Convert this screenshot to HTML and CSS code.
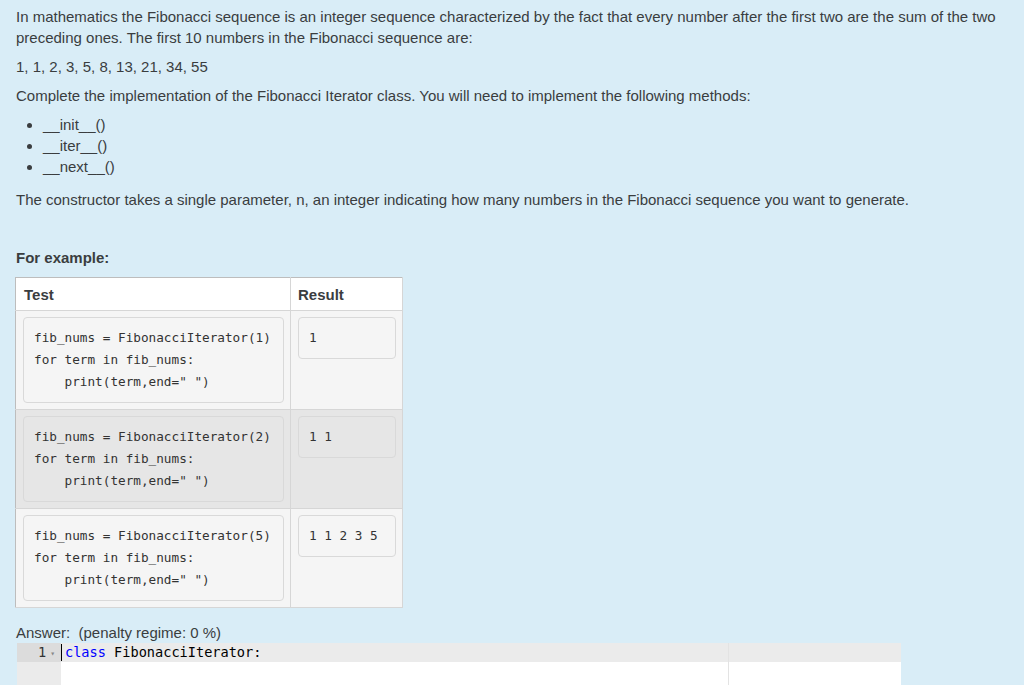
FILE: index.html
```html
<!doctype html>
<html>
<head>
<meta charset="utf-8">
<title>Fibonacci Iterator</title>
<link rel="stylesheet" href="styles.css">
</head>

<body>
<div class="qtext">
	<p>In mathematics the Fibonacci sequence is an integer sequence characterized by the fact that every number after the first two are the sum of the two preceding ones. The first 10 numbers in the Fibonacci sequence are:</p>
	<p>1, 1, 2, 3, 5, 8, 13, 21, 34, 55</p>
	<p>Complete the implementation of the Fibonacci Iterator class. You will need to implement the following methods:</p>
	<ul>
		<li>__init__()</li>
		<li>__iter__()</li>
		<li>__next__()</li>
	</ul>
	<p>The constructor takes a single parameter, n, an integer indicating how many numbers in the Fibonacci sequence you want to generate.</p>

	<h5 class="for-example">For example:</h5>
	<table class="examples">
		<thead>
			<tr>
				<th class="col-test">Test</th>
				<th class="col-result">Result</th>
			</tr>
		</thead>
		<tbody>
			<tr class="r0">
				<td class="col-test"><pre>fib_nums = FibonacciIterator(1)
for term in fib_nums:
    print(term,end=" ")</pre></td>
				<td class="col-result"><pre>1</pre></td>
			</tr>
			<tr class="r1">
				<td class="col-test"><pre>fib_nums = FibonacciIterator(2)
for term in fib_nums:
    print(term,end=" ")</pre></td>
				<td class="col-result"><pre>1 1</pre></td>
			</tr>
			<tr class="r0">
				<td class="col-test"><pre>fib_nums = FibonacciIterator(5)
for term in fib_nums:
    print(term,end=" ")</pre></td>
				<td class="col-result"><pre>1 1 2 3 5</pre></td>
			</tr>
		</tbody>
	</table>
</div>

<div class="answer">
	<div class="prompt">Answer: &nbsp;(penalty regime: 0 %)</div>
	<div class="editor">
		<div class="gutter">
			<div class="gutter-cell active">1<span class="fold">&#9662;</span></div>
		</div>
		<div class="content">
			<div class="print-margin"></div>
			<div class="line active"><span class="cursor"></span><span class="kw">class</span> FibonacciIterator:</div>
		</div>
	</div>
</div>
</body>
</html>
```

FILE: styles.css
```css
body,p,ul,h5,pre,table { margin:0; padding:0;}
body { background:#d9edf7; color:#3a3d3f; font-family:"Liberation Sans", Arial, sans-serif; font-size:15px; line-height:21px; overflow:hidden;}

.qtext { padding:6px 16px 0 16px;}
.qtext p { margin-bottom:8px;}
.qtext ul { padding-left:27px; margin-bottom:12px;}

.for-example { font-size:15px; font-weight:bold; margin-top:37px; margin-bottom:9px;}

.examples { border-collapse:collapse; background:#fff; margin-left:-1px; border:1px solid #bdbdbd;}
.examples th { text-align:left; font-weight:bold; height:32px; padding:0 8px; border-right:1px solid #d6d6d6; border-bottom:1px solid #d6d6d6;}
.examples th.col-result { padding-left:7px;}
.examples td { vertical-align:top; padding:6px 6px 6px 7px; border-right:1px solid #d6d6d6; border-bottom:1px solid #d6d6d6;}
.examples .col-test { width:258px;}
.examples .col-result { width:96px;}
.examples tr.r0 td { background:#f5f5f5;}
.examples tr.r1 td { background:#e6e6e6;}

.examples pre { font-family:"DejaVu Sans Mono", "Liberation Mono", monospace; font-size:12.7px; line-height:22px; color:#333; padding:9px 10px; border:1px solid #d9d9d9; border-radius:4px; white-space:pre;}
.examples tr.r0 pre { background:#f5f5f5;}
.examples tr.r1 pre { background:#e6e6e6;}
.examples .col-result pre { padding-left:10px;}

.answer { padding:14px 0 0 16px;}
.prompt { line-height:21px;}
.editor { display:flex; width:884px; height:300px; margin-left:1px; background:#fff;}
.gutter { width:44px; background:#ebebeb; color:#333; font-family:"DejaVu Sans Mono", "Liberation Mono", monospace; font-size:13.6px;}
.gutter-cell { height:19px; line-height:19px; text-align:right; padding-right:6px;}
.gutter-cell.active { background:#dcdcdc;}
.fold { font-size:8px; color:#888; margin-left:4px; vertical-align:middle;}

.content { position:relative; flex:1;}
.line { height:19px; line-height:19px; padding-left:4px; font-family:"DejaVu Sans Mono", "Liberation Mono", monospace; font-size:13.6px; color:#000; white-space:pre;}
.line.active { background:#ebebeb;}
.kw { color:#0000ff;}
.cursor { position:absolute; left:0; top:1px; width:1px; height:17px; background:#000;}
.print-margin { position:absolute; left:667px; top:0; bottom:0; width:1px; background:#e3e3e3;}
```
